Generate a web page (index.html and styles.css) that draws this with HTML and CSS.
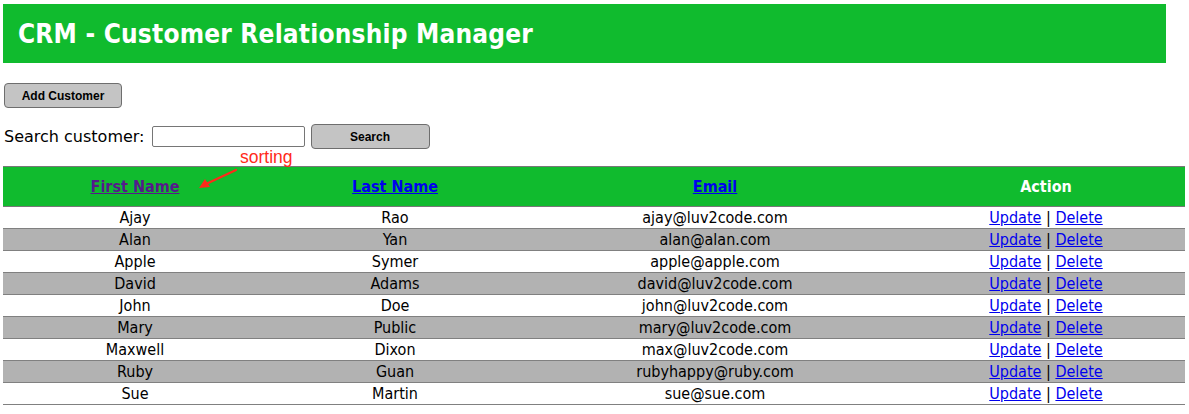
FILE: index.html
```html
<!DOCTYPE html>
<html>
<head>
<meta charset="utf-8">
<title>CRM</title>
<link rel="stylesheet" href="styles.css">
</head>
<body>
<div class="page">
  <header class="banner">
    <h1>CRM - Customer Relationship Manager</h1>
  </header>

  <div class="toolbar">
    <button class="btn btn-add" type="button">Add Customer</button>
    <form class="search">
      <label for="q">Search customer:</label>
      <input id="q" class="search-input" type="text">
      <button class="btn btn-search" type="button">Search</button>
    </form>
  </div>

  <div class="table-wrap">
    <div class="note">
      <span class="note-text">sorting</span>
      <svg class="note-arrow" width="44" height="24" viewBox="0 0 44 24">
        <line x1="40" y1="2" x2="10" y2="16" stroke="#ff2a1a" stroke-width="2.2" stroke-linecap="round"/>
        <polygon points="3,20 9,11 14,19" fill="#ff2a1a"/>
      </svg>
    </div>
    <table class="grid">
      <colgroup>
        <col class="c1"><col class="c2"><col class="c3"><col class="c4">
      </colgroup>
      <thead>
        <tr>
          <th><a class="visited" href="#">First Name</a></th>
          <th><a href="#">Last Name</a></th>
          <th><a href="#">Email</a></th>
          <th>Action</th>
        </tr>
      </thead>
      <tbody>
        <tr><td>Ajay</td><td>Rao</td><td>ajay@luv2code.com</td><td><a href="#">Update</a> | <a href="#">Delete</a></td></tr>
        <tr><td>Alan</td><td>Yan</td><td>alan@alan.com</td><td><a href="#">Update</a> | <a href="#">Delete</a></td></tr>
        <tr><td>Apple</td><td>Symer</td><td>apple@apple.com</td><td><a href="#">Update</a> | <a href="#">Delete</a></td></tr>
        <tr><td>David</td><td>Adams</td><td>david@luv2code.com</td><td><a href="#">Update</a> | <a href="#">Delete</a></td></tr>
        <tr><td>John</td><td>Doe</td><td>john@luv2code.com</td><td><a href="#">Update</a> | <a href="#">Delete</a></td></tr>
        <tr><td>Mary</td><td>Public</td><td>mary@luv2code.com</td><td><a href="#">Update</a> | <a href="#">Delete</a></td></tr>
        <tr><td>Maxwell</td><td>Dixon</td><td>max@luv2code.com</td><td><a href="#">Update</a> | <a href="#">Delete</a></td></tr>
        <tr><td>Ruby</td><td>Guan</td><td>rubyhappy@ruby.com</td><td><a href="#">Update</a> | <a href="#">Delete</a></td></tr>
        <tr><td>Sue</td><td>Martin</td><td>sue@sue.com</td><td><a href="#">Update</a> | <a href="#">Delete</a></td></tr>
      </tbody>
    </table>
  </div>
</div>
</body>
</html>
```

FILE: styles.css
```css
html, body {
  margin: 0;
  padding: 0;
  background: #ffffff;
}

.page {
  padding: 4px 4px 0 3px;
  font-family: "DejaVu Sans Condensed", "DejaVu Sans", sans-serif;
  color: #000;
}

.banner {
  width: 1163px;
  height: 59px;
  background: #10bb2e;
  display: flex;
  align-items: center;
  padding-left: 15px;
  box-sizing: border-box;
}

.banner h1 {
  margin: 0;
  color: #ffffff;
  font-family: "DejaVu Sans Condensed", "DejaVu Sans", sans-serif;
  font-weight: bold;
  font-size: 26px;
  letter-spacing: 0.2px;
}

.toolbar {
  display: flex;
  flex-direction: column;
  align-items: flex-start;
  padding-top: 20px;
  gap: 16px;
}

.btn {
  font-family: "Liberation Sans", Arial, sans-serif;
  font-weight: bold;
  font-size: 12px;
  color: #000;
  background: #c4c4c4;
  border: 1px solid #6e6e6e;
  border-radius: 4px;
  height: 25px;
  padding: 0;
  cursor: pointer;
}

.btn-add {
  width: 118px;
  margin-left: 1px;
}

.btn-search {
  width: 119px;
}

.search {
  display: flex;
  align-items: center;
  margin: 0 0 0 1px;
}

.search label {
  font-family: "DejaVu Sans", Verdana, sans-serif;
  font-size: 16px;
  margin-right: 7px;
}

.search-input {
  width: 153px;
  height: 21px;
  box-sizing: border-box;
  border: 1px solid #767676;
  border-radius: 2px;
  margin-right: 6px;
  padding: 0 3px;
}

.table-wrap {
  position: relative;
  margin-top: 17px;
}

.note {
  position: absolute;
  left: 193px;
  top: -15px;
  width: 110px;
  height: 44px;
}

.note-text {
  position: absolute;
  left: 44px;
  top: -4px;
  font-family: "Liberation Sans", Helvetica, Arial, sans-serif;
  font-size: 17.5px;
  color: #ff2a1a;
}

.note-arrow {
  position: absolute;
  left: 0;
  top: 17px;
}

.grid {
  width: 1182px;
  border-collapse: collapse;
  font-size: 16px;
}

.grid .c1 { width: 264px; }
.grid .c2 { width: 256px; }
.grid .c3 { width: 384px; }
.grid .c4 { width: 278px; }

.grid thead tr {
  background: #10bb2e;
  border-top: 1px solid #777777;
  border-bottom: 1px solid #777777;
}

.grid th {
  height: 39px;
  padding: 0;
  font-weight: bold;
  color: #ffffff;
  text-align: center;
  vertical-align: middle;
}

.grid th a {
  color: #0000ee;
}

.grid th a.visited {
  color: #551a8b;
}

.grid tbody tr {
  border-bottom: 1px solid #808080;
}

.grid tbody tr:nth-child(even) {
  background: #b2b2b2;
}

.grid td {
  height: 21px;
  padding: 0;
  text-align: center;
  vertical-align: middle;
  line-height: 20px;
}

.grid td a {
  color: #0000ee;
}
```
